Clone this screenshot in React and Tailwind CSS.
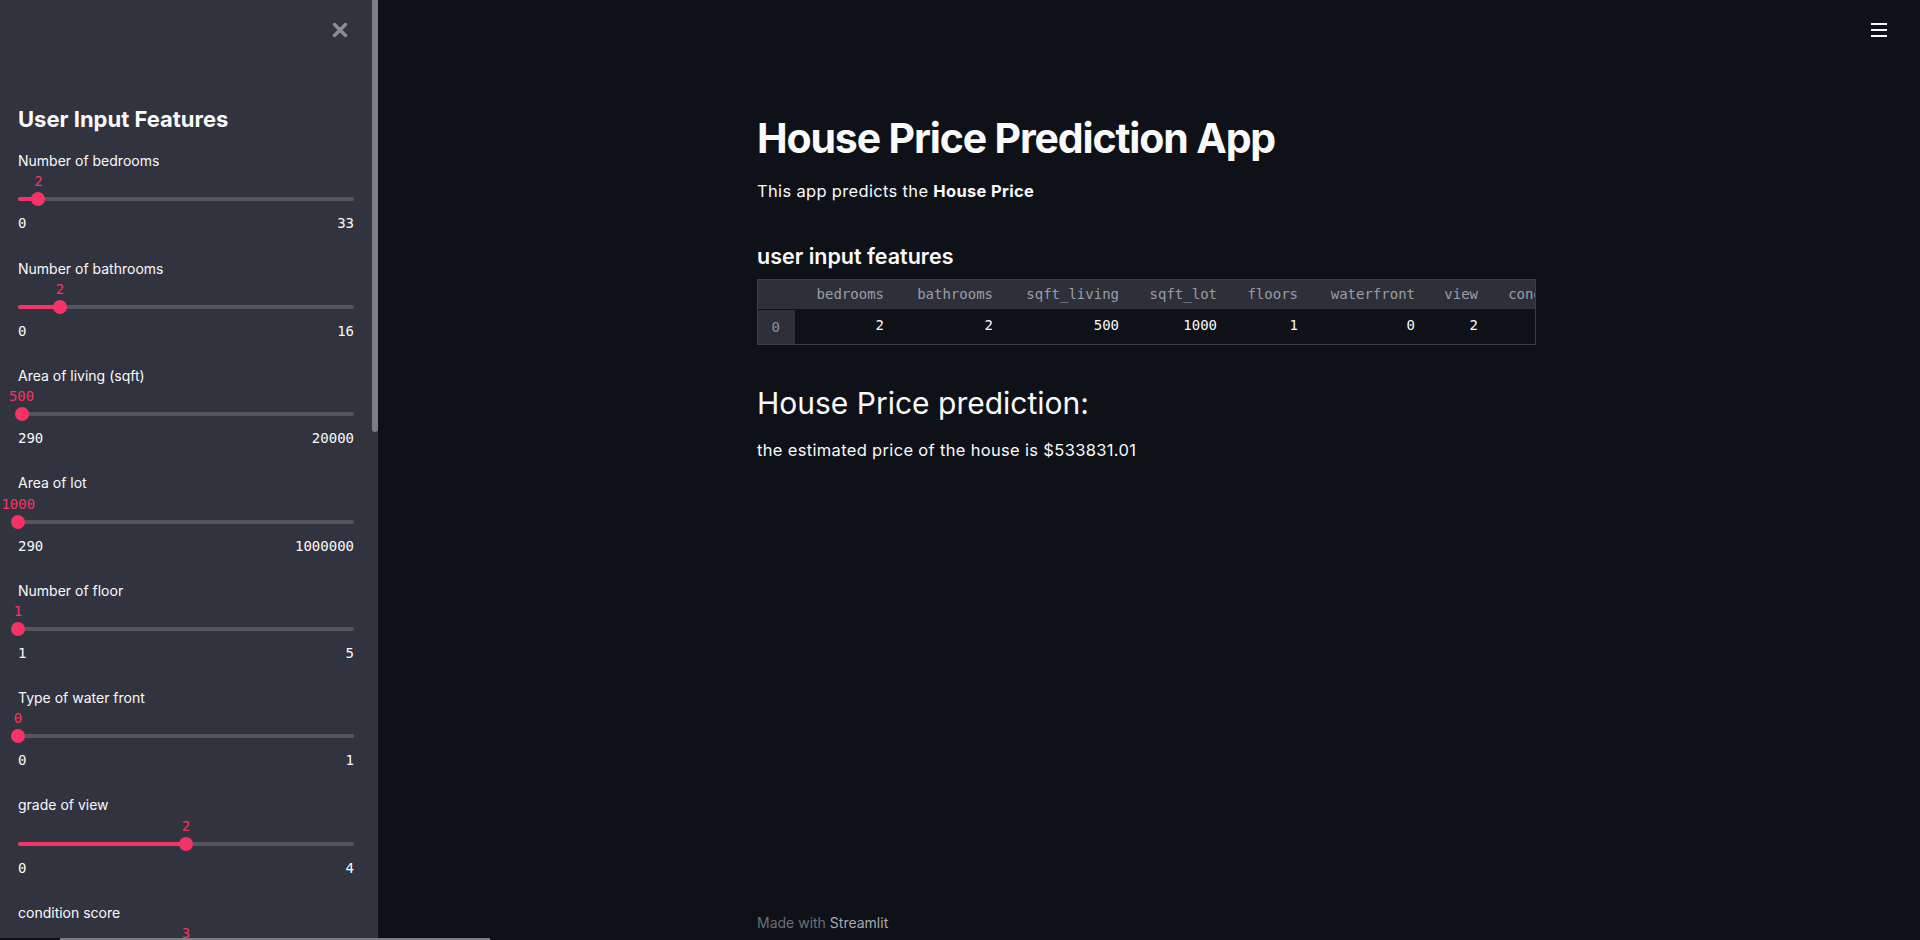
import React from 'react';

const sliders = [
  { label: 'Number of bedrooms', min: 0, max: 33, value: 2 },
  { label: 'Number of bathrooms', min: 0, max: 16, value: 2 },
  { label: 'Area of living (sqft)', min: 290, max: 20000, value: 500 },
  { label: 'Area of lot', min: 290, max: 1000000, value: 1000 },
  { label: 'Number of floor', min: 1, max: 5, value: 1 },
  { label: 'Type of water front', min: 0, max: 1, value: 0 },
  { label: 'grade of view', min: 0, max: 4, value: 2 },
  { label: 'condition score', min: 1, max: 5, value: 3 },
];

const columns = [
  { name: 'bedrooms', value: 2, w: 'w-[104px]' },
  { name: 'bathrooms', value: 2, w: 'w-[109px]' },
  { name: 'sqft_living', value: 500, w: 'w-[126px]' },
  { name: 'sqft_lot', value: 1000, w: 'w-[98px]' },
  { name: 'floors', value: 1, w: 'w-[81px]' },
  { name: 'waterfront', value: 0, w: 'w-[117px]' },
  { name: 'view', value: 2, w: 'w-[63px]' },
  { name: 'condition', value: 3, w: 'w-[106px]' },
  { name: 'grade', value: 7, w: 'w-[70px]' },
];

const mono = "font-['DejaVu_Sans_Mono',monospace]";

function Slider({ label, min, max, value }) {
  const pct = ((value - min) / (max - min)) * 100;
  return (
    <div className="pb-[26.06px]">
      <div className="text-[14px] leading-[21px] text-[#fafafa]">{label}</div>
      <div className="relative mt-[2.3px] h-[16px]">
        <span
          className={`${mono} absolute top-0 -translate-x-1/2 whitespace-nowrap text-[14px] leading-[16px] text-[#f63366]`}
          style={{ left: `${pct}%` }}
        >
          {value}
        </span>
      </div>
      <div className="relative mt-[3px] h-[14px]">
        <div className="absolute left-0 right-0 top-[5px] h-[4px] rounded-full bg-[#53555f]" />
        <div
          className="absolute left-0 top-[5px] h-[4px] rounded-l-full bg-[#f63366]"
          style={{ width: `${pct}%` }}
        />
        <div
          className="absolute top-0 h-[14px] w-[14px] -translate-x-1/2 rounded-full bg-[#f63366]"
          style={{ left: `${pct}%` }}
        />
      </div>
      <div className={`${mono} mt-[9px] flex justify-between text-[14px] leading-[16px] text-[#fafafa]`}>
        <span>{min}</span>
        <span>{max}</span>
      </div>
    </div>
  );
}

function Sidebar() {
  return (
    <aside className="relative h-[940px] w-[378px] shrink-0 overflow-hidden bg-[#31333f] pl-[18px] pr-[24px]">
      <div className="flex justify-end pt-[22px] pr-[6px]">
        {/* close */}
        <svg width="16" height="16" viewBox="0 0 16 16">
          <path d="M2.5 2.5 L13.5 13.5 M13.5 2.5 L2.5 13.5" stroke="#8b8d95" strokeWidth="3.4" strokeLinecap="round" />
        </svg>
      </div>
      <h2 className="mt-[67px] text-[22px] font-bold leading-[28px] text-[#fafafa]">User Input Features</h2>
      <div className="mt-[17.2px]">
        {sliders.map((s) => (
          <Slider key={s.label} {...s} />
        ))}
      </div>
      {/* scrollbar */}
      <div className="absolute right-0 top-0 h-[432px] w-[6px] rounded-b-full bg-[#7c7e87]" />
    </aside>
  );
}

function DataTable() {
  return (
    <div className={`${mono} mt-[9.5px] w-[779px] overflow-hidden border border-[#3a3c46] text-[14px]`}>
      <div className="flex h-[29px] w-max items-center bg-[#2e3039] text-[#9a9da6]">
        <div className="w-[37px] shrink-0" />
        {columns.map((c) => (
          <div key={c.name} className={`${c.w} shrink-0 whitespace-nowrap pr-[15px] text-right`}>
            {c.name}
          </div>
        ))}
      </div>
      <div className="flex h-[35px] w-max items-stretch text-[#fafafa]">
        <div className="flex w-[37px] shrink-0 items-center justify-end border-t border-[#0e1117] bg-[#2e3039] pr-[15px] text-[#8b8e97]">
          0
        </div>
        {columns.map((c) => (
          <div key={c.name} className={`${c.w} flex shrink-0 items-center justify-end pb-[3px] pr-[15px]`}>
            {c.value}
          </div>
        ))}
      </div>
    </div>
  );
}

export default function App() {
  return (
    <div className="relative flex h-[940px] w-[1920px] overflow-hidden bg-[#0e1117] font-['Inter',sans-serif] text-[#fafafa]">
      <Sidebar />
      <main className="relative flex h-[940px] flex-1 flex-col overflow-hidden">
        <div className="absolute right-[33px] top-[23px] flex flex-col gap-[4px]">
          <span className="h-[2px] w-[16px] bg-[#fafafa]" />
          <span className="h-[2px] w-[16px] bg-[#fafafa]" />
          <span className="h-[2px] w-[16px] bg-[#fafafa]" />
        </div>
        <div className="mx-auto flex w-[784px] flex-1 flex-col pt-[112.8px]">
          <h1 className="text-[41px] font-bold leading-[50px] tracking-[-0.028em]">House Price Prediction App</h1>
          <p className="mt-[16.2px] text-[16.5px] leading-[24px] tracking-[0.02em]">
            This app predicts the <strong className="font-bold">House Price</strong>
          </p>
          <h3 className="mt-[38.7px] text-[21.5px] font-semibold leading-[28px]">user input features</h3>
          <DataTable />
          <h2 className="mt-[39.4px] text-[30px] font-normal leading-[36px]">House Price prediction:</h2>
          <p className="mt-[17.5px] text-[16.5px] leading-[24px] tracking-[0.02em]">
            the estimated price of the house is $533831.01
          </p>
          <footer className="mt-auto pb-[7px] text-[14px] leading-[20px] text-[#6c6f78]">
            Made with <span className="text-[#a6a9b0]">Streamlit</span>
          </footer>
        </div>
      </main>
      <div className="absolute bottom-0 left-0 h-[2px] w-[60px] bg-[#0e1117]" />
      <div className="absolute bottom-0 left-[60px] h-[2px] w-[430px] bg-[#7c7e87]" />
    </div>
  );
}
